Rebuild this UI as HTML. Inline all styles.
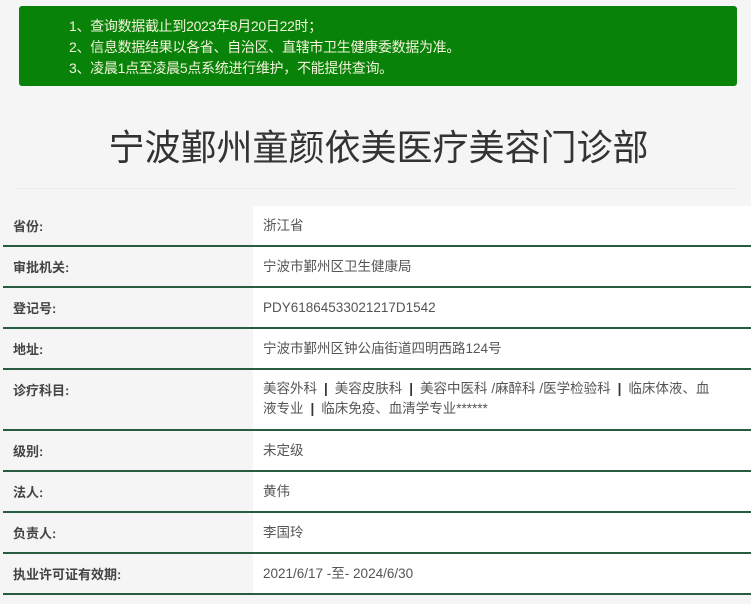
<!DOCTYPE html>
<html><head><meta charset="utf-8"><style>
*{margin:0;padding:0;box-sizing:border-box}
body{width:751px;height:604px;background:#f5f5f5;font-family:"Liberation Sans","Noto Sans CJK SC",sans-serif;overflow:hidden;position:relative}
.notice{position:absolute;left:19px;top:6px;width:718px;height:80px;background:#088208;border-radius:3px;color:#f4f4dc;font-size:14px}
.notice div{position:absolute;left:50px;white-space:nowrap;line-height:20px;letter-spacing:-0.3px}
.title{position:absolute;top:125px;left:0;width:757px;text-align:center;font-size:36px;color:#333;line-height:46px}
.hr{position:absolute;left:15px;top:188px;width:722px;height:1px;background:#ebebeb}
.row{position:absolute;left:3px;width:748px;border-bottom:2px solid #2a5a40}
.row .l{position:absolute;left:10px;font-weight:bold;color:#444;font-size:13px}
.row .v{position:absolute;left:250px;top:0;bottom:0;right:0;background:#fff}
.row .v span{position:absolute;left:10px;color:#555;font-size:13.5px;line-height:20px;right:0;white-space:nowrap}
b{font-weight:bold;color:#333;padding:0 7px}
</style></head><body>
<div class="notice">
<div style="top:10px">1、查询数据截止到2023年8月20日22时；</div>
<div style="top:31px">2、信息数据结果以各省、自治区、直辖市卫生健康委数据为准。</div>
<div style="top:52px">3、凌晨1点至凌晨5点系统进行维护，不能提供查询。</div>
</div>
<div class="title">宁波鄞州童颜依美医疗美容门诊部</div>
<div class="hr"></div>

<div class="row" style="top:206px;height:41px"><div class="l" style="top:10px">省份:</div><div class="v"><span style="top:10px">浙江省</span></div></div>
<div class="row" style="top:247px;height:41px"><div class="l" style="top:10px">审批机关:</div><div class="v"><span style="top:10px">宁波市鄞州区卫生健康局</span></div></div>
<div class="row" style="top:288px;height:41px"><div class="l" style="top:10px">登记号:</div><div class="v"><span style="top:10px">PDY61864533021217D1542</span></div></div>
<div class="row" style="top:329px;height:41px"><div class="l" style="top:10px">地址:</div><div class="v"><span style="top:10px">宁波市鄞州区钟公庙街道四明西路124号</span></div></div>
<div class="row" style="top:370px;height:61px"><div class="l" style="top:10px">诊疗科目:</div><div class="v"><span style="top:9px">美容外科<b>|</b>美容皮肤科<b>|</b>美容中医科 /麻醉科 /医学检验科<b>|</b>临床体液、血<br>液专业<b>|</b>临床免疫、血清学专业******</span></div></div>
<div class="row" style="top:431px;height:41px"><div class="l" style="top:10px">级别:</div><div class="v"><span style="top:10px">未定级</span></div></div>
<div class="row" style="top:472px;height:41px"><div class="l" style="top:10px">法人:</div><div class="v"><span style="top:10px">黄伟</span></div></div>
<div class="row" style="top:513px;height:41px"><div class="l" style="top:10px">负责人:</div><div class="v"><span style="top:10px">李国玲</span></div></div>
<div class="row" style="top:554px;height:41px"><div class="l" style="top:10px">执业许可证有效期:</div><div class="v"><span style="top:10px">2021/6/17 -至- 2024/6/30</span></div></div>
</body></html>
